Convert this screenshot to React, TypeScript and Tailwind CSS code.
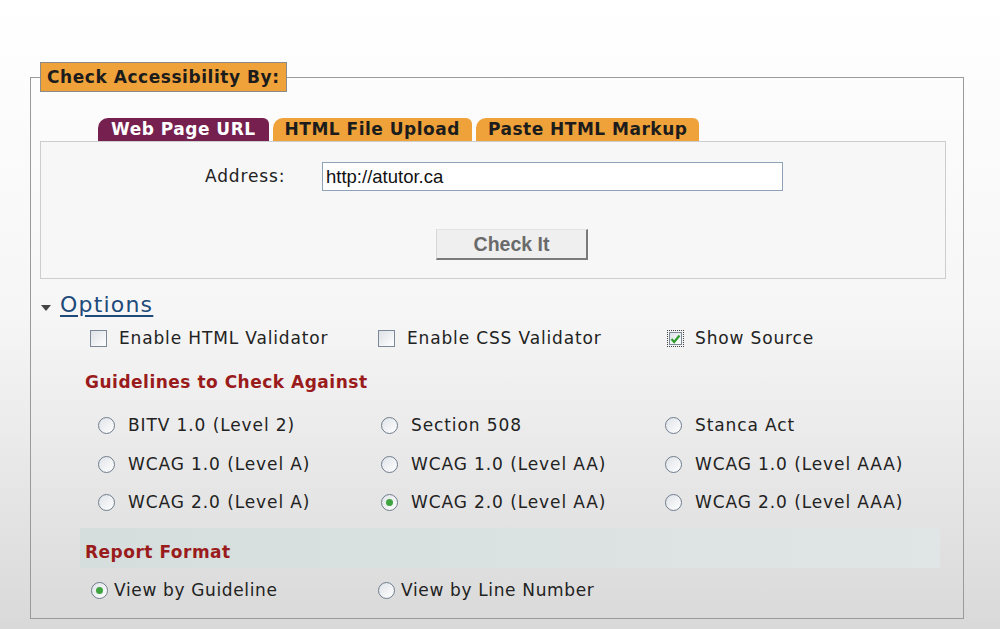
import React from "react";

const verdana = { fontFamily: '"DejaVu Sans", Verdana, sans-serif' };
const arial = { fontFamily: '"Liberation Sans", Arial, sans-serif' };

function Radio({ checked = false }: { checked?: boolean }) {
  return (
    <span className="flex h-[17px] w-[17px] shrink-0 items-center justify-center rounded-full border border-[#6f7d8c] bg-gradient-to-br from-[#dfe3e8] to-white">
      {checked && <span className="h-[7px] w-[7px] rounded-full bg-[#3fa33f]" />}
    </span>
  );
}

function Checkbox({ checked = false, focused = false }: { checked?: boolean; focused?: boolean }) {
  return (
    <span
      className={
        "flex h-[17px] w-[17px] shrink-0 items-center justify-center " +
        (focused ? "border border-dotted border-[#444] p-[1px]" : "")
      }
    >
      <span className="flex h-full w-full items-center justify-center border border-[#7b8896] bg-gradient-to-br from-[#dde1e6] to-white">
        {checked && (
          <svg width="11" height="10" viewBox="0 0 11 10">
            <path d="M1.5 5 L4.2 8 L9.5 1.5" fill="none" stroke="#2f9e2f" strokeWidth="2.2" />
          </svg>
        )}
      </span>
    </span>
  );
}

const guidelines = [
  ["BITV 1.0 (Level 2)", "Section 508", "Stanca Act"],
  ["WCAG 1.0 (Level A)", "WCAG 1.0 (Level AA)", "WCAG 1.0 (Level AAA)"],
  ["WCAG 2.0 (Level A)", "WCAG 2.0 (Level AA)", "WCAG 2.0 (Level AAA)"],
];

export default function App() {
  return (
    <div
      className="h-[629px] w-[1000px] overflow-hidden bg-gradient-to-b from-white via-[#f6f6f6] to-[#d9d9d9] pt-[62px] text-[#222]"
      style={verdana}
    >
      <fieldset className="ml-[30px] h-[557px] w-[934px] border border-[#9a9a9a] pl-[9px] pr-[17px] pt-0">
        {/* Legend */}
        <legend className="h-[30px] border border-[#8a8a8a] bg-[#f0a23a] px-[6px] text-[17px] font-bold leading-[28px] tracking-[0.55px] text-[#1c1c1c]">
          Check Accessibility By:
        </legend>

        {/* Tabs */}
        <div className="mt-[26px] flex items-end gap-[4px] pl-[58px] text-[17px] font-bold tracking-[0.5px]">
          <div className="flex h-[23px] items-center rounded-tl-[10px] rounded-tr-[6px] bg-[#76204f] px-[13px] pt-[1px] text-white">
            Web Page URL
          </div>
          <div className="flex h-[23px] items-center rounded-tl-[10px] rounded-tr-[6px] bg-[#f0a23a] px-[12px] pt-[1px] text-[#1c1c1c]">
            HTML File Upload
          </div>
          <div className="flex h-[23px] items-center rounded-tl-[10px] rounded-tr-[6px] bg-[#f0a23a] px-[12px] pt-[1px] text-[#1c1c1c]">
            Paste HTML Markup
          </div>
        </div>

        {/* Tab panel */}
        <div className="h-[138px] border border-[#cdcdcd] bg-[#f7f7f7]">
          <div className="mt-[20px] flex items-center">
            <span className="ml-[164px] w-[117px] text-[17px] tracking-[0.85px] text-[#222]">Address:</span>
            <div
              className="flex h-[29px] w-[461px] items-center border border-[#8ea3b8] bg-white px-[3px] text-[18.5px] text-[#111]"
              style={arial}
            >
              http://atutor.ca
            </div>
          </div>
          <div className="mt-[38px] flex pl-[395px]">
            <button
              className="h-[31px] w-[152px] border-b-2 border-r-2 border-l border-t border-b-[#7a7a7a] border-r-[#7a7a7a] border-l-[#d8d8d8] border-t-[#e4e4e4] bg-[#efefef] text-[19.5px] font-bold text-[#6a6a6a]"
              style={arial}
            >
              Check It
            </button>
          </div>
        </div>

        {/* Options */}
        <div className="mt-[12px] flex items-center">
          <svg width="12" height="8" viewBox="0 0 12 8" className="mt-[6px]">
            <path d="M1 1 L11 1 L6 7 Z" fill="#444" />
          </svg>
          <span className="ml-[8px] text-[22px] leading-[28px] tracking-[1.2px] text-[#1d4a7a] underline underline-offset-[3px]">
            Options
          </span>
        </div>

        <div className="mt-[7px] flex items-center text-[17px] tracking-[0.85px] text-[#222]">
          <div className="ml-[50px] flex w-[288px] items-center gap-[12px]">
            <Checkbox />
            <span>Enable HTML Validator</span>
          </div>
          <div className="flex w-[289px] items-center gap-[12px]">
            <Checkbox />
            <span>Enable CSS Validator</span>
          </div>
          <div className="flex items-center gap-[11px]">
            <Checkbox checked focused />
            <span>Show Source</span>
          </div>
        </div>

        <div className="ml-[45px] mt-[18px] text-[17px] font-bold tracking-[0.5px] text-[#9a1b1b]">
          Guidelines to Check Against
        </div>

        <div className="ml-[58px] mt-[18px] flex flex-col gap-[13px] text-[17px] tracking-[0.9px] text-[#222]">
          {guidelines.map((row, r) => (
            <div key={r} className="grid grid-cols-[283px_284px_1fr]">
              {row.map((g, c) => (
                <div key={g} className="flex items-center gap-[13px]">
                  <Radio checked={r === 2 && c === 1} />
                  <span>{g}</span>
                </div>
              ))}
            </div>
          ))}
        </div>

        {/* Report format */}
        <div className="ml-[40px] mr-[6px] mt-[12px] flex h-[40px] items-center bg-gradient-to-r from-[#d6dedd] to-[#dfe6e5] pl-[5px] pt-[10px] text-[17px] font-bold tracking-[0.5px] text-[#9a1b1b]">
          Report Format
        </div>
        <div className="mt-[10px] flex items-center text-[17px] tracking-[0.65px] text-[#222]">
          <div className="ml-[51px] flex w-[287px] items-center gap-[6px]">
            <Radio checked />
            <span>View by Guideline</span>
          </div>
          <div className="flex items-center gap-[6px]">
            <Radio />
            <span>View by Line Number</span>
          </div>
        </div>
      </fieldset>
    </div>
  );
}
